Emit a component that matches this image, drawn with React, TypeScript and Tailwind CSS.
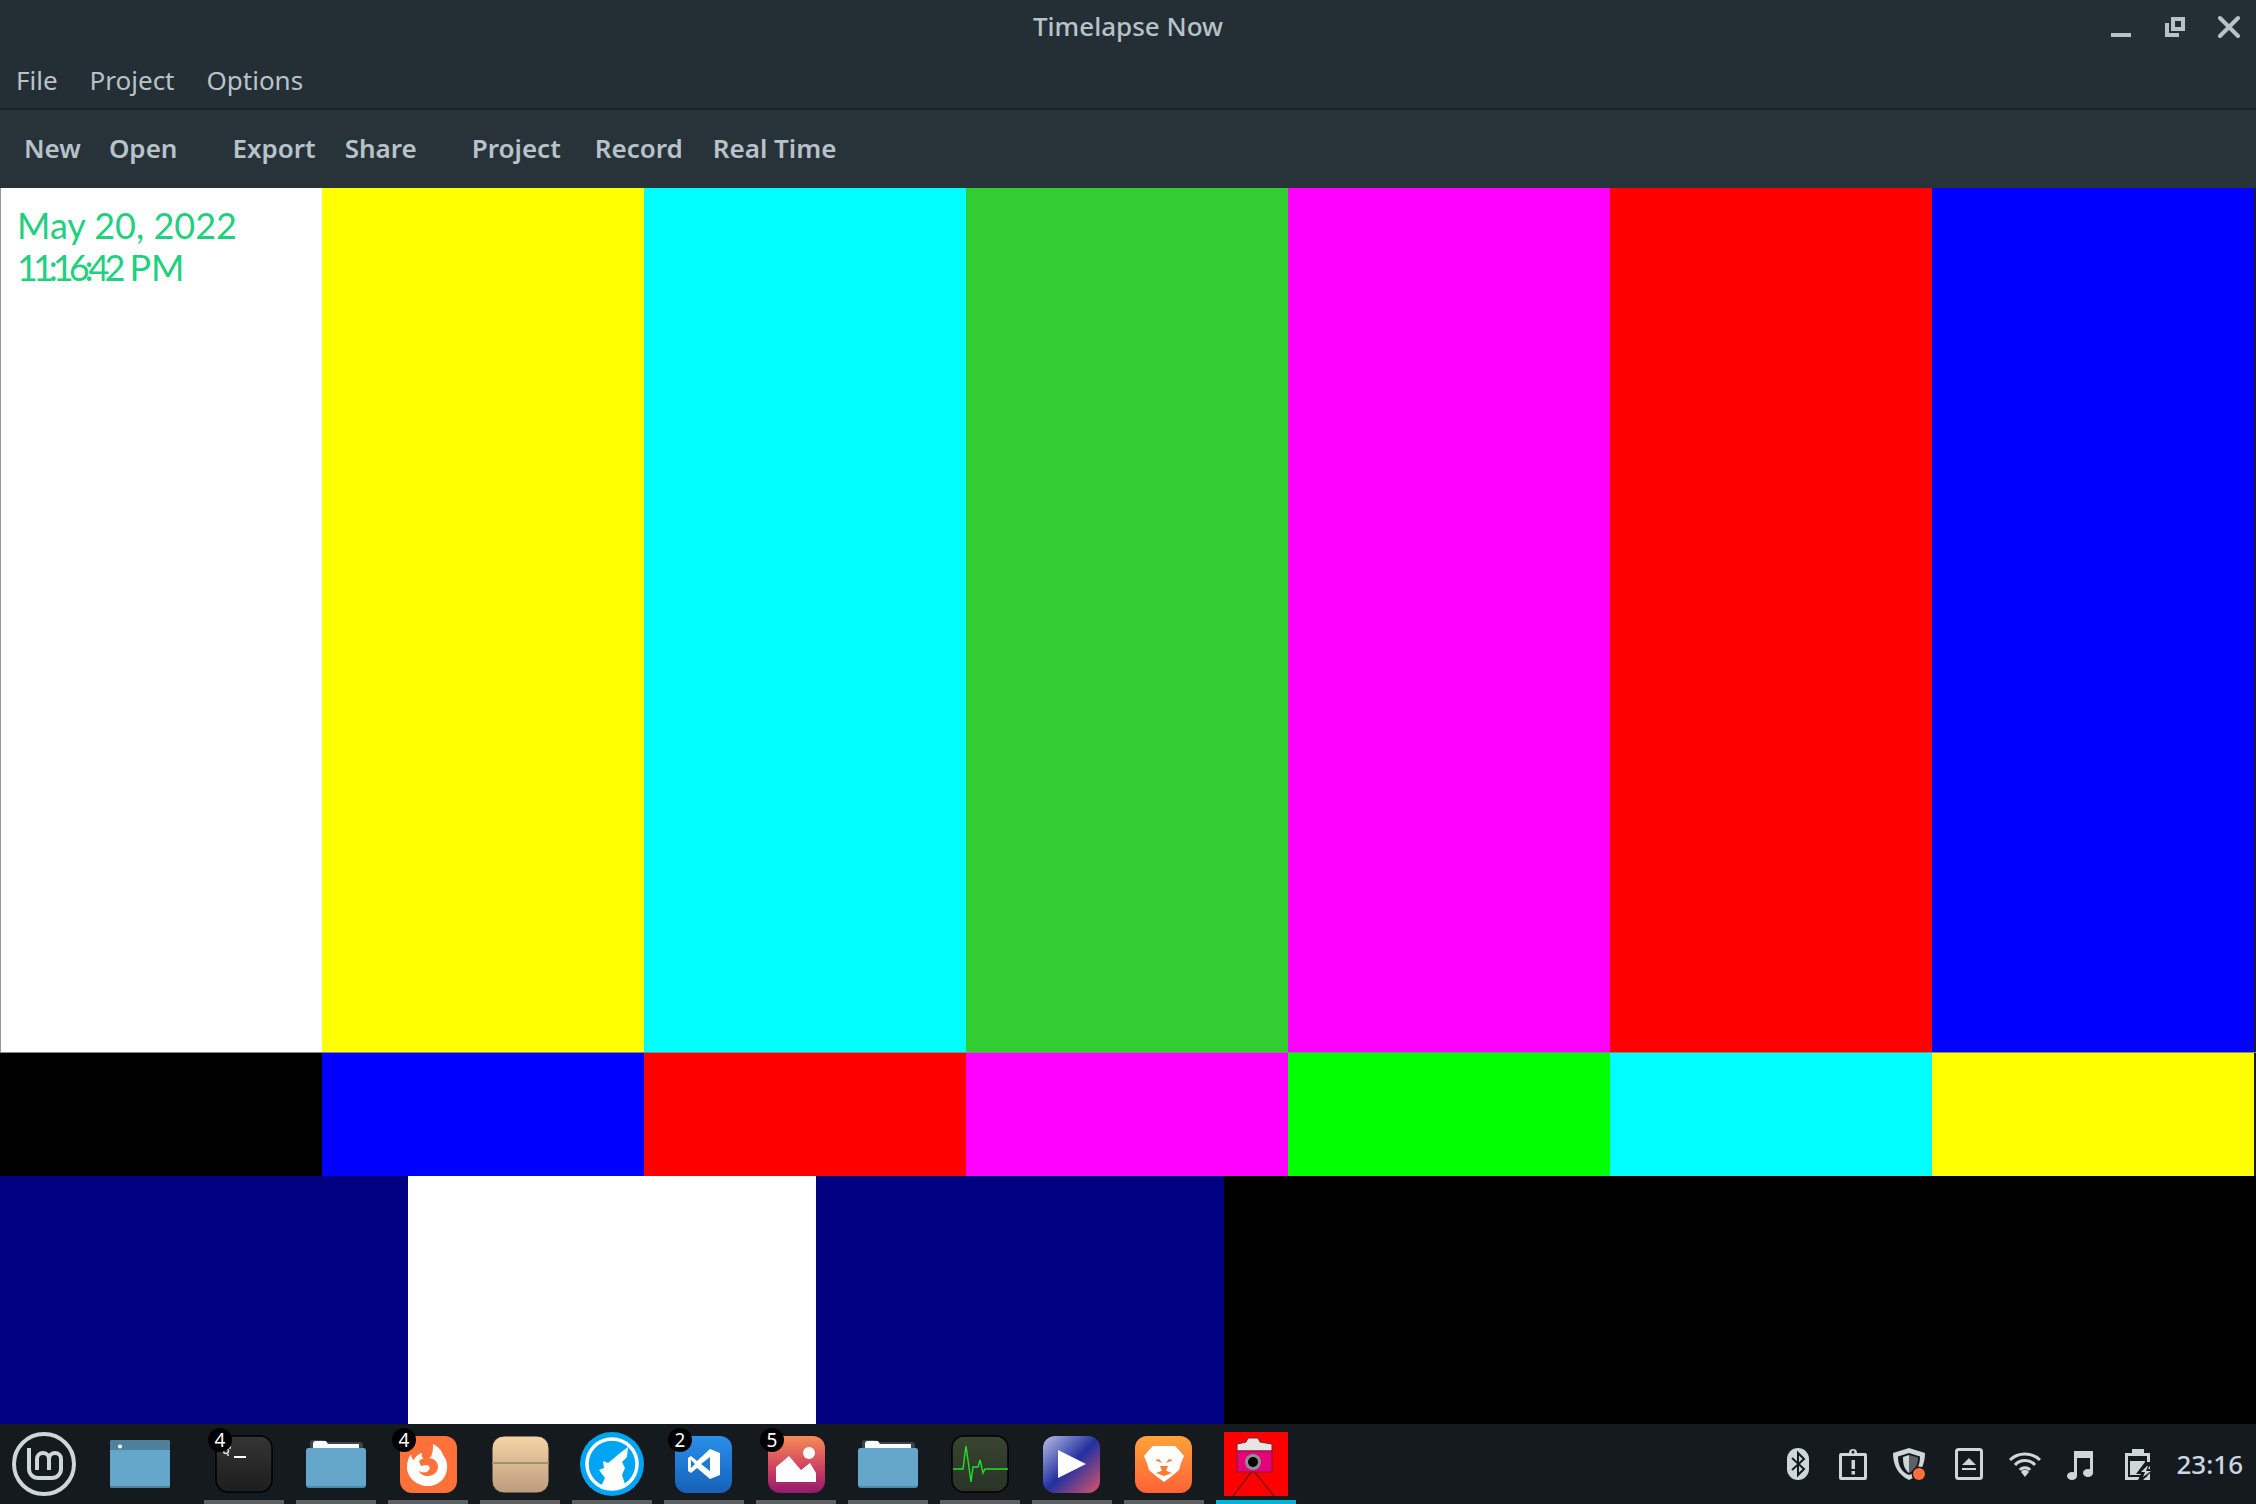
import React from "react";

const topBars = ["bg-white", "bg-[#ffff00]", "bg-[#00ffff]", "bg-[#32cd32]", "bg-[#ff00ff]", "bg-[#ff0000]", "bg-[#0000ff]"];
const midBars = ["bg-black", "bg-[#0000ff]", "bg-[#ff0000]", "bg-[#ff00ff]", "bg-[#00ff00]", "bg-[#00ffff]", "bg-[#ffff00]"];
const lowBars = ["bg-[#000080]", "bg-white", "bg-[#000080]"];

function MintIcon() {
  return (
    <svg viewBox="0 0 64 64" className="h-16 w-16" fill="none" stroke="#cfd6d8">
      <circle cx="32" cy="32" r="30" strokeWidth="4" />
      <path strokeWidth="4" d="M17 16V37a9 9 0 0 0 9 9H40a9 9 0 0 0 9-9V27a6 6 0 0 0-12 0V38M37 27a6 6 0 0 0-12 0V38" />
    </svg>
  );
}

function WindowIcon() {
  return (
    <svg viewBox="0 0 64 64" className="h-16 w-16">
      <rect x="2" y="8" width="60" height="48" rx="2" fill="#65a6cb" />
      <path d="M2 10a2 2 0 0 1 2-2H60a2 2 0 0 1 2 2V18H2Z" fill="#4e7f9b" />
      <path d="M2 54v0a2 2 0 0 0 2 2H60a2 2 0 0 0 2-2v0Z" fill="#4e7f9b" />
      <circle cx="12" cy="14.500" r="2" fill="#fff" />
    </svg>
  );
}

function TerminalIcon() {
  return (
    <svg viewBox="0 0 64 64" className="h-16 w-16">
      <defs>
        <linearGradient id="term" x1="0" y1="0" x2="0" y2="1">
          <stop offset="0" stopColor="#353535" />
          <stop offset="1" stopColor="#1d1d1d" />
        </linearGradient>
      </defs>
      <rect x="4" y="4" width="56" height="56" rx="12" fill="url(#term)" stroke="#000" strokeWidth="1.5" />
      <rect x="22" y="24" width="12" height="2" fill="#fff" />
      <circle cx="14" cy="19" r="2.500" fill="none" stroke="#ddd" strokeWidth="1.5" />
      <path d="M18 14v3M16 22v2" stroke="#ddd" strokeWidth="1.5" />
    </svg>
  );
}

function FolderIcon() {
  return (
    <svg viewBox="0 0 64 64" className="h-16 w-16">
      <path d="M6 16V11a3 3 0 0 1 3-3H19a3 3 0 0 1 2 2H56a3 3 0 0 1 3 3V16Z" fill="#39464e" />
      <path d="M9 16V12a3 3 0 0 1 3-3H22l2 3H55V16Z" fill="#fff" />
      <rect x="2" y="16" width="60" height="40" rx="3" fill="#4e87a8" />
      <path d="M2 19a3 3 0 0 1 3-3H59a3 3 0 0 1 3 3V52a2 2 0 0 1-2 2H4a2 2 0 0 1-2-2Z" fill="#65a6cb" />
    </svg>
  );
}

function FirefoxIcon() {
  return (
    <svg viewBox="0 0 64 64" className="h-16 w-16">
      <rect x="4" y="4" width="57" height="57" rx="12" fill="#ff7139" />
      <path d="M37 12c6 3 9 7 10 11 2 2 5 8 4 14-1 10-9 17-19 17-11 0-21-8-21-19 0-6 2-10 4-13 0 3 1 5 3 6 1-3 4-6 8-7-1 3 0 5 2 6 5 1 7-2 8-5 1-4 1-7 1-10Z" fill="#fff" />
      <path d="M23 29c3-3 6-3 9-3 5 0 10 3 10 9 0 5-5 9-10 9-4 0-8-2-9-5 3 2 8 2 10-1 2-2 0-5-3-5-2 0-4 1-5 1-1-2-1-3-2-5Z" fill="#ff7139" />
    </svg>
  );
}

function BoxIcon() {
  return (
    <svg viewBox="0 0 64 64" className="h-16 w-16">
      <defs>
        <linearGradient id="box" x1="0" y1="0" x2="0" y2="1">
          <stop offset="0" stopColor="#f6d3a6" />
          <stop offset="1" stopColor="#bb9d7d" />
        </linearGradient>
      </defs>
      <rect x="4" y="4" width="57" height="57" rx="12" fill="url(#box)" stroke="#1b1d1f" />
      <rect x="4" y="30" width="57" height="2" fill="#a78b6d" />
    </svg>
  );
}

function WolfIcon() {
  return (
    <svg viewBox="0 0 64 64" className="h-16 w-16">
      <circle cx="32" cy="32" r="32" fill="#00a4f4" />
      <circle cx="32" cy="32" r="25" fill="none" stroke="#fff" strokeWidth="3.5" />
      <path d="M20 56 25 46 19 38 24 36 23 29 28 31 33 27 40 21 48 15 47 25 42 30 45 36 42 43 46 55Q32 61 20 56Z" fill="#fff" />
    </svg>
  );
}

function VsCodeIcon() {
  return (
    <svg viewBox="0 0 64 64" className="h-16 w-16">
      <defs>
        <linearGradient id="vsc" x1="0" y1="0" x2="0" y2="1">
          <stop offset="0" stopColor="#2a90ea" />
          <stop offset="1" stopColor="#1561b9" />
        </linearGradient>
      </defs>
      <rect x="3" y="4" width="57" height="57" rx="12" fill="url(#vsc)" />
      <path fillRule="evenodd" d="M38 17 48 21V43L38 47 25 36 19 41 16 39V26L19 24 25 29ZM38 25 29 32 38 39ZM19 28V36L23 32Z" fill="#fff" />
    </svg>
  );
}

function PhotosIcon() {
  return (
    <svg viewBox="0 0 64 64" className="h-16 w-16">
      <defs>
        <linearGradient id="pho" x1="0" y1="0" x2="0" y2="1">
          <stop offset="0" stopColor="#f68d55" />
          <stop offset="0.6" stopColor="#cb3c62" />
          <stop offset="1" stopColor="#921a6e" />
        </linearGradient>
      </defs>
      <rect x="4" y="4" width="57" height="57" rx="12" fill="url(#pho)" />
      <circle cx="45" cy="21" r="6" fill="#fff" />
      <path d="M12 50V35L25 24 37 38 46 31 52 41V50Z" fill="#fff" />
    </svg>
  );
}

function PulseIcon() {
  return (
    <svg viewBox="0 0 64 64" className="h-16 w-16">
      <defs>
        <linearGradient id="pul" x1="0" y1="0" x2="0" y2="1">
          <stop offset="0" stopColor="#384530" />
          <stop offset="1" stopColor="#2a3326" />
        </linearGradient>
      </defs>
      <rect x="4" y="4" width="56" height="56" rx="12" fill="url(#pul)" stroke="#000" strokeWidth="1.5" />
      <path d="M5 37H15L18 14 23 50 25 35H30L32 28 35 41 37 37H60" fill="none" stroke="#22e02a" strokeWidth="1.4" />
    </svg>
  );
}

function PlayIcon() {
  return (
    <svg viewBox="0 0 64 64" className="h-16 w-16">
      <defs>
        <linearGradient id="ply" x1="0" y1="0" x2="1" y2="1">
          <stop offset="0" stopColor="#b9bee4" />
          <stop offset="0.5" stopColor="#2231a0" />
          <stop offset="1" stopColor="#dc5468" />
        </linearGradient>
      </defs>
      <rect x="3" y="4" width="57" height="57" rx="12" fill="url(#ply)" />
      <path d="M18 18V46L46 32Z" fill="#fff" />
    </svg>
  );
}

function BraveIcon() {
  return (
    <svg viewBox="0 0 64 64" className="h-16 w-16">
      <defs>
        <linearGradient id="brv" x1="0" y1="0" x2="0" y2="1">
          <stop offset="0" stopColor="#ffa23a" />
          <stop offset="1" stopColor="#ff6235" />
        </linearGradient>
      </defs>
      <rect x="3" y="4" width="57" height="57" rx="12" fill="url(#brv)" />
      <path d="M21 14H43L47 18 52 24 49 31 47 38 40 44 32 50 24 44 17 38 15 31 12 24 17 18Z" fill="#fff" />
      <path d="M23 28 30 31 27 27ZM41 28 34 31 37 27ZM28 34H36L34 39 32 40 30 39Z" fill="#ff7a35" />
      <path d="M24 41 32 38 40 41 32 44Z" fill="#ff7a35" />
    </svg>
  );
}

function CameraIcon() {
  return (
    <svg viewBox="0 0 64 64" className="h-16 w-16 bg-[#ff0000]">
      <path d="M29 38 9 64M29 38 50 64" stroke="#8a1010" strokeWidth="1.5" fill="none" />
      <path d="M13 19V12L22 10 24 6H34L36 10 48 12V19Z" fill="#e9e2e2" stroke="#7a2030" />
      <rect x="13" y="19" width="35" height="21" fill="#e6007a" stroke="#7a2030" />
      <circle cx="29" cy="30" r="8" fill="#909090" />
      <circle cx="29" cy="30" r="5" fill="#000" />
    </svg>
  );
}

function BluetoothTray() {
  return (
    <svg viewBox="0 0 32 32" className="h-8 w-8">
      <rect x="5" y="0" width="22" height="32" rx="11" fill="#cfd6da" />
      <path d="M10 10 22 21 16 27V5L22 11 10 22" fill="none" stroke="#151a1e" strokeWidth="2" />
    </svg>
  );
}

function ClipboardTray() {
  return (
    <svg viewBox="0 0 32 32" className="ml-[23px] h-8 w-8">
      <path d="M2 7a2 2 0 0 1 2-2H12a4 4 0 0 1 8 0H28a2 2 0 0 1 2 2V30a2 2 0 0 1-2 2H4a2 2 0 0 1-2-2Z M5 8V29H27V8Z" fillRule="evenodd" fill="#cfd6da" />
      <rect x="14.500" y="12" width="3.500" height="9" fill="#cfd6da" />
      <rect x="14.500" y="23" width="3.500" height="3.500" fill="#cfd6da" />
      <circle cx="16" cy="4" r="1.500" fill="#151a1e" />
    </svg>
  );
}

function ShieldTray() {
  return (
    <svg viewBox="0 0 32 32" className="ml-[24px] h-8 w-8">
      <path d="M16 0 32 5C32 17 27 27 16 32 5 27 0 17 0 5Z" fill="#cfd6da" />
      <path d="M16 5 27 8.500C27 17 24 24 16 27 8 24 5 17 5 8.500Z" fill="#151a1e" />
      <path d="M16 7 10 9C10 16 11 21 16 25Z" fill="#cfd6da" />
      <path d="M16 7 25 9.500C25 17 22 22 16 25Z" fill="#5b6367" />
      <circle cx="26" cy="26" r="7.500" fill="#151a1e" />
      <circle cx="26" cy="26" r="6" fill="#ff7139" />
    </svg>
  );
}

function EjectTray() {
  return (
    <svg viewBox="0 0 32 32" className="ml-[28px] h-8 w-8">
      <rect x="3.500" y="1.500" width="25" height="29" rx="2" fill="none" stroke="#cfd6da" strokeWidth="3" />
      <path d="M16 10 23 17H9Z M9 20H23V22H9Z" fill="#cfd6da" />
    </svg>
  );
}

function WifiTray() {
  return (
    <svg viewBox="0 0 32 32" className="ml-[24px] h-8 w-8" fill="none" stroke="#cfd6da" strokeWidth="3">
      <path d="M1 12C9 4 23 4 31 12" />
      <path d="M6 17C11 11 21 11 26 17" />
      <path d="M11 22C13 19 19 19 21 22" />
      <path d="M12 24C14 21 18 21 20 24L16 29Z" fill="#cfd6da" stroke="none" />
    </svg>
  );
}

function MusicTray() {
  return (
    <svg viewBox="0 0 32 32" className="ml-[23px] h-8 w-8">
      <path d="M10 3H29V25H26V10H13V28H10Z" fill="#cfd6da" />
      <ellipse cx="8" cy="28" rx="5" ry="4" fill="#cfd6da" />
      <ellipse cx="24" cy="25" rx="5" ry="4" fill="#cfd6da" />
    </svg>
  );
}

function BatteryTray() {
  return (
    <svg viewBox="0 0 32 32" className="ml-[27px] h-8 w-8">
      <path d="M2 5H9V1H21V5H27V32H2Z" fill="#cfd6da" />
      <path d="M5 8H24V29H5Z" fill="#151a1e" />
      <path d="M7 13H22V27H7Z" fill="#cfd6da" />
      <path d="M22 14 13 26H18L15 32H20L31 21H25L29 14Z" fill="#151a1e" />
      <path d="M24 18 18 24H22L20 29 28 23H23L25 18Z" fill="#cfd6da" />
    </svg>
  );
}

function Slot({ badge, active, icon }: { badge?: string; active?: boolean; icon: React.ReactNode }) {
  return (
    <div className="relative flex h-20 w-20 items-center justify-center">
      {icon}
      {badge && (
        <span className="absolute left-[4px] top-[4px] flex h-6 w-6 items-center justify-center rounded-full bg-black text-[19px] leading-none text-white">
          {badge}
        </span>
      )}
      <span className={`absolute bottom-0 left-0 h-1 w-full ${active ? "bg-[#00b4d8]" : "bg-[#5c6063]"}`} />
    </div>
  );
}

export default function App() {
  return (
    <div className="flex h-[1504px] w-[2256px] flex-col overflow-hidden bg-black font-['Noto_Sans',sans-serif] text-[#b8c2c9]">
      <header className="relative flex h-[52px] items-center justify-center bg-[#242e35] text-[26px] font-medium">
        Timelapse Now
        <svg viewBox="0 0 129 24" className="absolute right-[16px] top-[15px] h-6 w-[129px]" fill="#b8c2c9">
          <rect x="0" y="18" width="20" height="4" />
          <path fillRule="evenodd" d="M60 2H74V16H60ZM64 6V12H70V6Z" />
          <path d="M54 8H58V18H68V22H54Z" />
          <path d="M109 3 127 21M127 3 109 21" stroke="#b8c2c9" strokeWidth="4" strokeLinecap="round" />
        </svg>
      </header>
      <nav className="flex h-[58px] items-center gap-[32px] border-b-2 border-[#1c2328] bg-[#242e35] pl-4 text-[26px]">
        <span>File</span>
        <span>Project</span>
        <span>Options</span>
      </nav>
      <div className="flex h-[78px] items-center bg-[#283239] pb-[2px] pl-6 text-[26px] font-semibold">
        <div className="flex gap-[28px]">
          <span>New</span>
          <span>Open</span>
        </div>
        <div className="ml-[55px] flex gap-[29px]">
          <span>Export</span>
          <span>Share</span>
        </div>
        <div className="ml-[55px] flex gap-[30px]">
          <span className="mr-[4px]">Project</span>
          <span>Record</span>
          <span>Real Time</span>
        </div>
      </div>

      <main className="flex h-[1236px] flex-col bg-black">
        <div className="flex h-[864px] w-full bg-[#1c1c1c]">
          {topBars.map((c, i) => (
            <div key={i} className={`h-full w-[322px] ${c} ${i === 0 ? "border-l border-[#999] px-4 pt-[16px]" : ""}`}>
              {i === 0 && (
                <p className="font-['Lato',sans-serif] text-[36px] leading-[42px] text-[#1fd07f]">
                  May 20, 2022
                  <br />
                  <span className="tracking-[-5px]">11:16:42</span> PM
                </p>
              )}
            </div>
          ))}
        </div>
        <div className="flex h-[124px] w-full border-t border-[#888] bg-[#1c1c1c]">
          {midBars.map((c, i) => (
            <div key={i} className={`h-full w-[322px] ${c}`} />
          ))}
        </div>
        <div className="flex h-[248px] w-full">
          {lowBars.map((c, i) => (
            <div key={i} className={`h-full w-[408px] ${c}`} />
          ))}
        </div>
      </main>

      <footer className="flex h-20 flex-1 items-center bg-[#151a1e]">
        <div className="ml-3">
          <MintIcon />
        </div>
        <div className="ml-8">
          <WindowIcon />
        </div>
        <div className="ml-8 flex gap-3">
          <Slot badge="4" icon={<TerminalIcon />} />
          <Slot icon={<FolderIcon />} />
          <Slot badge="4" icon={<FirefoxIcon />} />
          <Slot icon={<BoxIcon />} />
          <Slot icon={<WolfIcon />} />
          <Slot badge="2" icon={<VsCodeIcon />} />
          <Slot badge="5" icon={<PhotosIcon />} />
          <Slot icon={<FolderIcon />} />
          <Slot icon={<PulseIcon />} />
          <Slot icon={<PlayIcon />} />
          <Slot icon={<BraveIcon />} />
          <Slot active icon={<CameraIcon />} />
        </div>
        <div className="ml-auto flex items-center pr-[13px]">
          <BluetoothTray />
          <ClipboardTray />
          <ShieldTray />
          <EjectTray />
          <WifiTray />
          <MusicTray />
          <BatteryTray />
          <span className="ml-[21px] text-[26px] font-medium leading-none text-[#cbd8e3]">23:16</span>
        </div>
      </footer>
    </div>
  );
}
